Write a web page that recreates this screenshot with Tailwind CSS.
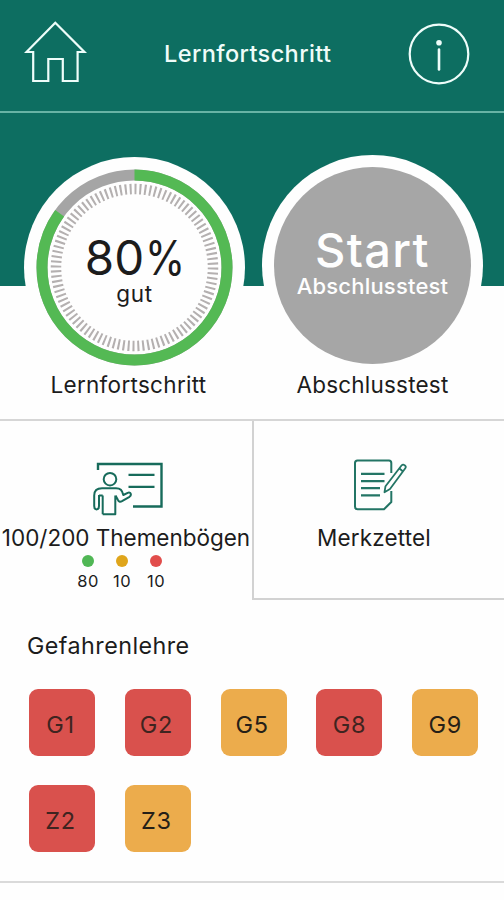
<!DOCTYPE html>
<html lang="de">
<head>
<meta charset="utf-8">
<title>Lernfortschritt</title>
<script src="https://cdn.jsdelivr.net/npm/@tailwindcss/browser@4"></script>
</head>
<body class="w-[504px] h-[900px] overflow-hidden bg-[#fefefe] font-['Inter','Liberation_Sans',sans-serif] text-[#1c1c1c]">
<header class="h-[113px] bg-[#0d6e61] border-b-2 border-[#68b3a5] flex items-start justify-between pl-6 pr-[34px]">
  <svg class="w-[64px] h-[64px] mt-5" viewBox="24 20 64 64" fill="none" stroke="#eefdfa" stroke-width="2.2"><path d="M55.3 22.7 26.5 52H33.2V81H48.3V59H62.8V81H77.6V52H84.4Z"/></svg>
  <h1 class="mt-[37.500px] text-[23.500px] leading-8 font-medium tracking-[0.4px] text-[#effcf9] whitespace-nowrap w-[168px]">Lernfortschritt</h1>
  <svg class="w-[62px] h-[62px] mt-[22.5px]" viewBox="0 0 62 62" fill="none" stroke="#eefdfa"><circle cx="31" cy="31" r="29.3" stroke-width="2.2"/><circle cx="31" cy="19.7" r="2.8" fill="#eefdfa" stroke="none"/><path d="M31 26.5V46.5" stroke-width="2.6" stroke-linecap="round"/></svg>
</header>
<section class="h-[306px] bg-[linear-gradient(#0d6e61_173px,#fefefe_173px)] flex pt-[42px] pl-6">
  <div class="w-[221px] flex flex-col items-center">
    <div class="relative w-[221px] h-[221px] mt-[1.5px]">
      <svg class="w-full h-full" viewBox="-110.5 -110.5 221 221" fill="none">
        <circle r="110.5" fill="#fefefe"/>
        <circle r="92.5" stroke="#a5a5a5" stroke-width="11"/>
        <circle r="92.5" stroke="#54b954" stroke-width="11" pathLength="100" stroke-dasharray="85 15" transform="rotate(-90)"/>
        <circle r="78.5" stroke="#b4b0b0" stroke-width="10.5" pathLength="300" stroke-dasharray="1.25 1.75"/>
      </svg>
      <div class="absolute inset-0 flex flex-col items-center">
        <p class="mt-[78px] ml-[7px] text-[47.500px] leading-[46px] tracking-[0.3px] whitespace-nowrap">80<span class="inline-block origin-left scale-x-[0.86] tracking-normal">%</span></p>
        <p class="mt-[1px] text-[22.500px] leading-6 tracking-[0.6px]">gut</p>
      </div>
    </div>
    <p class="-mt-[7px] text-[22.500px] leading-7 tracking-[0.3px] whitespace-nowrap -ml-[12px]">Lernfortschritt</p>
  </div>
  <div class="w-[221px] ml-[17px] flex flex-col items-center">
    <div class="w-[221px] h-[221px] rounded-full bg-[#fefefe] p-[12px]">
      <div class="w-[197px] h-[197px] rounded-full bg-[#a6a6a6] text-[#fefefe] flex flex-col items-center">
        <p class="mt-[60px] text-[47px] leading-[46px] tracking-[1.3px] font-medium">Start</p>
        <p class="mt-px text-[22px] leading-6 tracking-[0.2px] font-medium">Abschlusstest</p>
      </div>
    </div>
    <p class="-mt-[5.5px] text-[22.500px] leading-7 tracking-[0.2px] whitespace-nowrap">Abschlusstest</p>
  </div>
</section>
<section class="h-[181px] flex border-t-2 border-[#d6d6d6]">
  <div class="w-[252px] flex flex-col items-center whitespace-nowrap">
    <svg class="w-[74px] h-[58px] mt-[37px] ml-1" viewBox="91 458 74 58" fill="none" stroke="#176b5b" stroke-width="2" stroke-linejoin="round">
      <path d="M98 470V464H161.500V506.500H133" stroke-width="2.4" stroke-linejoin="miter"/>
      <path d="M128.500 474.800H154.500M128.500 486.800H154.500" stroke-width="2.2"/>
      <circle cx="110" cy="479.200" r="6.300"/>
      <path d="M102.700 514.200V495.500M102.700 514.200H115.300V495.500M99 495V506C99 510.500 94.200 510.500 94.200 506V495.500C94.200 491 97 488.200 102 488.200H116C120.500 488.200 122 490 123.300 495L127.700 492.800C130.700 491.500 132 495 129.500 496.800L122 501.200C120 502.300 118.400 501.500 117.700 499.500L115.500 495.500"/>
      <path d="M99 495.500H102.700"/>
    </svg>
    <p class="mt-[8px] text-[22.500px] leading-7 tracking-[-0.02px]">100/200 Themenbögen</p>
    <div class="flex gap-[2px] mt-[3px] -ml-[8px] text-[16.500px] leading-5 tracking-[0.5px]">
      <div class="w-[32px] flex flex-col items-center gap-[4px]"><i class="w-[12px] h-[12px] rounded-full bg-[#50b755]"></i><span>80</span></div>
      <div class="w-[32px] flex flex-col items-center gap-[4px]"><i class="w-[12px] h-[12px] rounded-full bg-[#dfa51b]"></i><span>10</span></div>
      <div class="w-[32px] flex flex-col items-center gap-[4px]"><i class="w-[12px] h-[12px] rounded-full bg-[#e14d4b]"></i><span>10</span></div>
    </div>
  </div>
  <div class="w-[252px] border-l-2 border-b-2 border-[#d2d2d2] flex flex-col items-center">
    <svg class="w-[58px] h-[58px] mt-[35px] ml-px" viewBox="351 456 58 58" fill="none" stroke="#237565" stroke-width="2" stroke-linejoin="round">
      <path d="M391.300 473V463Q391.300 460.500 389 460.500H357.500Q355 460.500 355 463V506.500Q355 509.300 357.500 509.300H384L391.300 502V491"/>
      <path d="M361 473.800H384.500M361 481.200H384.500M361 488.200H380M361 495.300H380" stroke-width="2.200"/>
      <path d="M401.500 465.500Q403 463.800 404.700 465.300Q406.500 466.500 405.300 468.300L390 489L384.500 492.200L385.500 486.200ZM399.500 468.500L403 471.500" stroke-width="1.800"/>
    </svg>
    <p class="mt-[10px] text-[22.500px] leading-7 tracking-[0.15px] -ml-[10px]">Merkzettel</p>
  </div>
</section>
<section class="h-[283px] border-b-2 border-[#dadada] pt-[32px] pl-[27px]">
  <h2 class="text-[23.300px] leading-7 tracking-[0.45px]">Gefahrenlehre</h2>
  <div class="mt-[29px] ml-[2px] grid grid-cols-[repeat(5,66px)] gap-x-[29.800px] gap-y-[29px] text-[23.500px] tracking-[0.6px] text-[#261f17]">
    <div class="h-[67px] rounded-[9px] bg-[#d9514d] flex items-center justify-center pt-[5px] pr-[3px] text-[#3f2420]">G1</div>
    <div class="h-[67px] rounded-[9px] bg-[#d9514d] flex items-center justify-center pt-[5px] pr-[3px] text-[#3f2420]">G2</div>
    <div class="h-[67px] rounded-[9px] bg-[#ecac4c] flex items-center justify-center pt-[5px] pr-[3px]">G5</div>
    <div class="h-[67px] rounded-[9px] bg-[#d9514d] flex items-center justify-center pt-[5px] text-[#3f2420]">G8</div>
    <div class="h-[67px] rounded-[9px] bg-[#ecac4c] flex items-center justify-center pt-[5px]">G9</div>
    <div class="h-[67px] rounded-[9px] bg-[#d9514d] flex items-center justify-center pt-[5px] pr-[3px] text-[#3f2420]">Z2</div>
    <div class="h-[67px] rounded-[9px] bg-[#ecac4c] flex items-center justify-center pt-[5px] pr-[3px]">Z3</div>
  </div>
</section>
</body>
</html>
